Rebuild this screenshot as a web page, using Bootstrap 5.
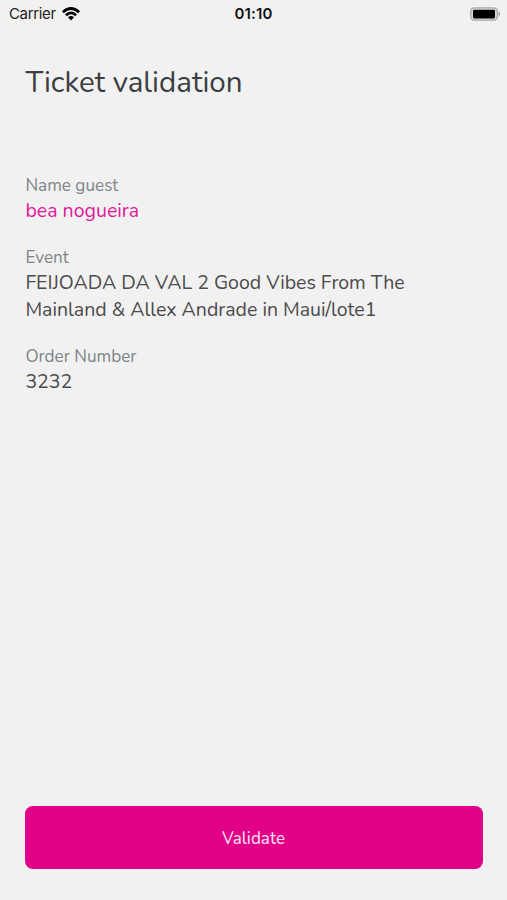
<!DOCTYPE html>
<html lang="en">
<head>
<meta charset="utf-8">
<meta name="viewport" content="width=device-width, initial-scale=1">
<title>Ticket validation</title>
<link href="https://cdn.jsdelivr.net/npm/bootstrap@5.3.0/dist/css/bootstrap.min.css" rel="stylesheet">
<style>
  body { background: #f1f1f1; color: #3c3d3f; font-family: Nunito, Lato, sans-serif; }
  .status-bar { height: 27px; padding: 0 6px 0 9px; font-family: Inter, sans-serif; color: #111; line-height: 27px; }
  .carrier { font-size: 15px; letter-spacing: -.35px; color: #222; }
  .clock { font-size: 15px; font-weight: 600; letter-spacing: .2px; margin-right: 3px; }
  .screen { padding: 0 24.5px 31px 25.4px; }
  .screen-title { font-size: 29.6px; line-height: 36px; font-weight: 400; margin: 37px 0 75px; }
  .ticket dt { font-size: 17.15px; line-height: 22px; font-weight: 400; color: #808488; }
  .ticket dd { font-size: 19.55px; line-height: 27px; margin: 0 0 23px; color: #4b4b4b; }
  .ticket .guest { color: #e1189a; }
  .validate { background: #e10087; border-radius: 8px; height: 63px; padding: 9px 13px 6px 12px; font-size: 17px; font-weight: 500; color: #fbd9ee; border: 0; }
</style>
</head>
<body>
<div class="d-flex flex-column vh-100">
  <header class="status-bar row g-0 align-items-center">
    <div class="col d-flex align-items-center"><span class="carrier">Carrier</span>
      <svg class="ms-1" width="21" height="14" viewBox="-2 0 21 14" fill="none" stroke="#000" stroke-width="2.7"><path d="M.9 5.2Q9-2.2 17.1 5.2M3.9 8.2Q9 3.6 14.1 8.2"/><path d="M6 10.3Q9 7.8 12 10.3L9 13.6Z" fill="#000" stroke="none"/></svg>
    </div>
    <div class="col-auto clock">01:10</div>
    <div class="col d-flex justify-content-end">
      <svg width="31" height="14" viewBox="0 0 31 14"><rect x=".8" y=".8" width="26.4" height="12.4" rx="3.5" fill="#ddd" stroke="#a9a9a9" stroke-width="1.3"/><rect x="3" y="2.8" width="22" height="8.6" rx="1.3"/><path d="M28.5 4.5Q32 7 28.5 9.5Z" fill="#a0a0a0"/></svg>
    </div>
  </header>
  <main class="screen flex-grow-1 d-flex flex-column">
    <h1 class="screen-title">Ticket validation</h1>
    <dl class="ticket mb-0">
      <dt>Name guest</dt>
      <dd class="guest">bea nogueira</dd>
      <dt>Event</dt>
      <dd>FEIJOADA DA VAL 2 Good Vibes From The<br>Mainland &amp; Allex Andrade in Maui/lote1</dd>
      <dt>Order Number</dt>
      <dd>3232</dd>
    </dl>
    <button type="button" class="btn validate mt-auto">Validate</button>
  </main>
</div>
<script src="https://cdn.jsdelivr.net/npm/bootstrap@5.3.0/dist/js/bootstrap.bundle.min.js"></script>
</body>
</html>
